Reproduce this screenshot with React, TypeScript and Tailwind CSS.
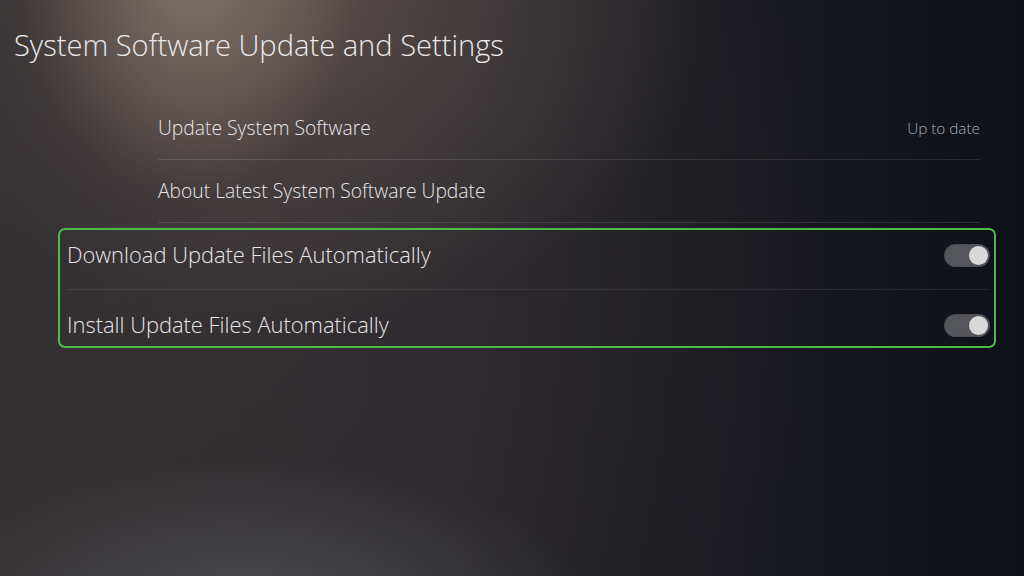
import React from "react";

function Toggle() {
  return (
    <div className="w-[46px] h-[23px] rounded-full bg-[#55565b] flex items-center justify-end pr-[2px] shadow-[inset_0_0_2px_rgba(0,0,0,0.4)]">
      <div className="w-[19px] h-[19px] rounded-full bg-[#d9d9d9]" />
    </div>
  );
}

export default function App() {
  return (
    <div
      className="w-[1024px] h-[576px] overflow-hidden flex flex-col text-[#e6e6e8] bg-[radial-gradient(ellipse_170px_230px_at_190px_-30px,rgba(165,145,130,0.6),transparent),radial-gradient(ellipse_420px_330px_at_300px_-10px,rgba(125,108,98,0.5),transparent),radial-gradient(ellipse_340px_150px_at_250px_610px,rgba(95,98,104,0.6),transparent),radial-gradient(ellipse_600px_700px_at_220px_250px,rgba(70,60,60,0.45),transparent),linear-gradient(90deg,#2e2b2e_0%,#26242a_45%,#17181f_80%,#0e1019_100%)]"
      style={{ fontFamily: '"Open Sans", "Noto Sans", sans-serif' }}
    >
      <h1 className="pl-[14px] pt-[25px] h-[98px] text-[29.1px] leading-[40px] font-light text-[#e9e9eb]">
        System Software Update and Settings
      </h1>

      <div className="ml-[158px] w-[822px] flex flex-col">
        <div className="h-[62px] flex items-center justify-between border-b border-[#ffffff1c]">
          <span className="text-[19.3px] font-light">Update System Software</span>
          <span className="text-[15.3px] font-light text-[#a9aab0]">Up to date</span>
        </div>
        <div className="h-[63px] flex items-center border-b border-[#ffffff1c]">
          <span className="text-[19.3px] font-light">About Latest System Software Update</span>
        </div>
      </div>

      <div className="mt-[5px] ml-[58px] w-[938px] h-[120px] border-2 border-[#4dbb47] rounded-[7px] flex flex-col pl-[7px] pr-[4px]">
        <div className="h-[60px] flex items-center justify-between border-b border-[#ffffff14] pb-[8px]">
          <span className="text-[21.9px] font-light">Download Update Files Automatically</span>
          <Toggle />
        </div>
        <div className="flex-1 flex items-center justify-between pt-[14px]">
          <span className="text-[21.9px] font-light">Install Update Files Automatically</span>
          <Toggle />
        </div>
      </div>
    </div>
  );
}
